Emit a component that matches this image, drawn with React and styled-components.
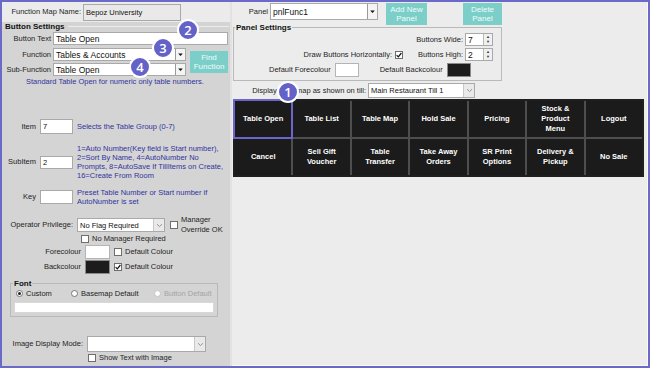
import React from 'react';
import styled, { createGlobalStyle } from 'styled-components';

const Global = createGlobalStyle`
  html, body { margin: 0; padding: 0; background: #ececec; }
  body {
    font-family: "Liberation Sans", Arial, sans-serif;
    font-size: 7.5px;
    color: #1e1e1e;
  }
  * { box-sizing: border-box; }
`;

const Frame = styled.div`
  position: relative;
  width: 650px;
  height: 368px;
  border: 2px solid #6c6ac8;
  display: flex;
  overflow: hidden;
`;

const LeftPane = styled.div`
  width: 228px;
  background: #d4d4d4;
  display: flex;
  flex-direction: column;
`;

const Divider = styled.div`
  width: 2px;
  background: #e2e2e2;
`;

const RightPane = styled.div`
  flex: 1;
  background: #ececec;
  display: flex;
  flex-direction: column;
  border-right: 1px solid #fafafa;
  border-bottom: 1px solid #fafafa;
`;

const TopBar = styled.div`
  height: 20px;
  background: #ebebeb;
  display: flex;
  align-items: center;
`;

const SectionTitle = styled.div`
  display: flex;
  align-items: center;
  height: 9px;
  line-height: 9px;
  padding-left: 3px;
  font-weight: bold;
  font-size: 8px;
  color: #111;
  &::after {
    content: "";
    flex: 1;
    height: 1px;
    margin: 0 1px 0 3px;
    background: #ededed;
  }
`;

const Row = styled.div`
  display: flex;
  align-items: ${p => p.$align || 'center'};
  justify-content: ${p => p.$justify || 'flex-start'};
  height: ${p => (p.$h ? `${p.$h}px` : 'auto')};
  margin-top: ${p => p.$mt || 0}px;
  margin-left: ${p => p.$ml || 0}px;
  flex-shrink: 0;
`;

const Col = styled.div`
  display: flex;
  flex-direction: column;
`;

const Label = styled.span`
  width: ${p => (p.$w ? `${p.$w}px` : 'auto')};
  flex-shrink: 0;
  text-align: ${p => (p.$w ? 'right' : 'left')};
  padding-right: ${p => (p.$w ? 2 : 0)}px;
  margin-left: ${p => p.$ml || 0}px;
  white-space: nowrap;
  color: ${p => (p.$muted ? '#a0a0a0' : '#1e1e1e')};
  line-height: 10px;
`;

const TextBox = styled.div`
  width: ${p => p.$w}px;
  height: ${p => p.$h}px;
  margin-left: ${p => p.$ml || 0}px;
  flex-shrink: 0;
  background: ${p => p.$bg || '#fff'};
  border: 1px solid #a9a9a9;
  padding: 0 2px;
  display: flex;
  align-items: center;
  white-space: nowrap;
  overflow: hidden;
  color: #111;
  font-size: ${p => (p.$big ? 8.5 : 7.5)}px;
`;

const SelectBox = styled(TextBox)`
  padding-right: 0;
  justify-content: space-between;
`;

const ArrowBox = styled.span`
  width: ${p => (p.$flat ? 11 : 10)}px;
  height: 100%;
  border-left: 1px solid ${p => (p.$flat ? '#c8c8c8' : '#9a9a9a')};
  background: ${p => (p.$flat ? '#e9e9e9' : '#f4f4f4')};
  display: flex;
  align-items: center;
  justify-content: center;
`;

const Spin = styled.span`
  width: 9px;
  height: 100%;
  border-left: 1px solid #b9b9b9;
  background: #f0f0f0;
  display: flex;
  flex-direction: column;
  align-items: center;
  justify-content: space-around;
  font-size: 4px;
  line-height: 4px;
  color: #333;
`;

const Help = styled.div`
  color: #33339e;
  line-height: ${p => p.$lh || 9}px;
  margin-left: ${p => p.$ml || 0}px;
  padding-left: ${p => p.$pl || 0}px;
  margin-top: ${p => p.$mt || 0}px;
  white-space: nowrap;
`;

const Check = styled.span`
  width: 8px;
  height: 8px;
  margin-left: ${p => p.$ml || 0}px;
  flex-shrink: 0;
  background: #fff;
  border: 1px solid #6e6e6e;
  display: flex;
  align-items: center;
  justify-content: center;
`;

const Radio = styled.span`
  width: 7px;
  height: 7px;
  border-radius: 50%;
  flex-shrink: 0;
  background: #fff;
  border: 1px solid ${p => (p.$disabled ? '#c4c4c4' : '#777')};
  display: flex;
  align-items: center;
  justify-content: center;
  &::after {
    content: "";
    width: 3px;
    height: 3px;
    border-radius: 50%;
    background: ${p => (p.$on ? '#222' : 'transparent')};
  }
`;

const Option = styled.span`
  width: ${p => (p.$w ? `${p.$w}px` : 'auto')};
  display: flex;
  align-items: center;
  gap: 3px;
  color: ${p => (p.$disabled ? '#a4a4a4' : '#1e1e1e')};
  white-space: nowrap;
`;

const Swatch = styled.span`
  width: ${p => p.$w}px;
  height: 14px;
  margin-left: ${p => p.$ml || 0}px;
  flex-shrink: 0;
  background: ${p => p.$c};
  border: 1px solid ${p => (p.$c === '#fff' ? '#b4b4b4' : '#8a8a8a')};
`;

const TealButton = styled.div`
  width: ${p => p.$w}px;
  height: 22px;
  margin-left: ${p => p.$ml || 0}px;
  margin-top: ${p => p.$mt || 0}px;
  flex-shrink: 0;
  background: #7ccfc9;
  color: #f1fbfa;
  display: flex;
  align-items: center;
  justify-content: center;
  text-align: center;
  line-height: 9px;
  font-size: 8px;
`;

const Group = styled.fieldset`
  margin: ${p => p.$mt || 0}px 0 0 ${p => p.$ml || 0}px;
  width: ${p => p.$w}px;
  padding: 0 ${p => p.$pr || 3}px 3px ${p => p.$pl || 3}px;
  border: 1px solid #b9b9b9;
  flex-shrink: 0;
  min-width: 0;
`;

const Legend = styled.legend`
  padding: 0 1px;
  margin-left: -1px;
  font-weight: bold;
  font-size: 8px;
  line-height: 9px;
  color: #111;
`;

const FontBox = styled.div`
  height: 11px;
  margin-top: 4px;
  background: #fff;
  border: 1px solid #d8d8d8;
`;

const ButtonGrid = styled.div`
  margin: 1px 0 0 1px;
  width: 411px;
  height: 78px;
  border: 2px solid #1f1f1f;
  background: #4e4e4e;
  display: grid;
  grid-template-columns: repeat(7, 1fr);
  grid-template-rows: repeat(2, 1fr);
  gap: 2px;
  flex-shrink: 0;
`;

const Cell = styled.div`
  background: #1b1b1b;
  color: #fff;
  font-weight: bold;
  font-size: 7.5px;
  line-height: 10px;
  display: flex;
  align-items: center;
  justify-content: center;
  text-align: center;
  padding: 0 4px;
  outline: ${p => (p.$selected ? '2px solid #6a67cc' : 'none')};
  position: relative;
  z-index: ${p => (p.$selected ? 1 : 0)};
`;

const Badge = styled.div`
  position: absolute;
  left: ${p => p.$x}px;
  top: ${p => p.$y}px;
  width: 22px;
  height: 22px;
  border-radius: 50%;
  background: #6462c8;
  border: 2px solid #fff;
  color: #fff;
  font-family: "Open Sans", "Liberation Sans", sans-serif;
  font-weight: 600;
  font-size: 13px;
  display: flex;
  align-items: center;
  justify-content: center;
  z-index: 5;
`;

const Tick = () => (
  <svg width="6" height="6" viewBox="0 0 6 6">
    <path d="M0.6 3.1 L2.3 4.8 L5.4 1" fill="none" stroke="#111" strokeWidth="1.2" />
  </svg>
);

const Arrow = ({ flat }) => (
  <svg width="7" height="5" viewBox="0 0 7 5">
    {flat
      ? <path d="M1 1.2 L3.5 3.6 L6 1.2" fill="none" stroke="#8a8a8a" strokeWidth="0.9" />
      : <path d="M1.2 1.5 L5.8 1.5 L3.5 4 Z" fill="#111" />}
  </svg>
);

const Select = ({ w, h, value, flat, big, ml }) => (
  <SelectBox $w={w} $h={h} $ml={ml} $big={big}>
    <span>{value}</span>
    <ArrowBox $flat={flat}><Arrow flat={flat} /></ArrowBox>
  </SelectBox>
);

const Spinner = ({ value, ml }) => (
  <SelectBox $w={28} $h={13} $ml={ml} $big>
    <span>{value}</span>
    <Spin><span>▲</span><span>▼</span></Spin>
  </SelectBox>
);

const buttons = [
  'Table Open', 'Table List', 'Table Map', 'Hold Sale', 'Pricing', 'Stock & Product Menu', 'Logout',
  'Cancel', 'Sell Gift Voucher', 'Table Transfer', 'Take Away Orders', 'SR Print Options', 'Delivery & Pickup', 'No Sale',
];

export default function App() {
  return (
    <>
      <Global />
      <Frame>
        <LeftPane>
          <TopBar>
            <Label $w={81}>Function Map Name:</Label>
            <TextBox $w={98} $h={17} $bg="#e9e9e9">Bepoz University</TextBox>
          </TopBar>
          <SectionTitle>Button Settings</SectionTitle>
          <Row $mt={1} $h={13}>
            <Label $w={51}>Button Text</Label>
            <TextBox $w={175} $h={13} $big>Table Open</TextBox>
          </Row>
          <Row $mt={3} $align="flex-start">
            <Col>
              <Row $h={13}>
                <Label $w={51}>Function</Label>
                <Select w={133} h={13} value="Tables & Accounts" big />
              </Row>
              <Row $mt={2} $h={13}>
                <Label $w={51}>Sub-Function</Label>
                <Select w={133} h={13} value="Table Open" big />
              </Row>
            </Col>
            <TealButton $w={38} $ml={4} $mt={3}>Find<br />Function</TealButton>
          </Row>
          <Help $mt={1} $pl={24}>Standard Table Open for numeric only table numbers.</Help>

          <Row $mt={33} $h={15}>
            <Label $w={36}>Item</Label>
            <TextBox $w={33} $h={15} $ml={2}>7</TextBox>
            <Help $ml={4}>Selects the Table Group (0-7)</Help>
          </Row>
          <Row $mt={10}>
            <Label $w={36}>SubItem</Label>
            <TextBox $w={33} $h={13} $ml={2}>2</TextBox>
            <Help $ml={4}>
              1=Auto Number(Key field is Start number),<br />
              2=Sort By Name, 4=AutoNumber No<br />
              Prompts, 8=AutoSave If TillItems on Create,<br />
              16=Create From Room
            </Help>
          </Row>
          <Row $mt={8}>
            <Label $w={36}>Key</Label>
            <TextBox $w={33} $h={14} $ml={2} />
            <Help $ml={4}>
              Preset Table Number or Start number if<br />
              AutoNumber is set
            </Help>
          </Row>

          <Row $mt={9} $h={20}>
            <Label $w={73}>Operator Privilege:</Label>
            <Select w={88} h={14} ml={2} value="No Flag Required" flat />
            <Check $ml={5} />
            <Label $ml={3}>Manager<br />Override OK</Label>
          </Row>
          <Row $mt={-1} $h={9} $ml={79}>
            <Check />
            <Label $ml={3}>No Manager Required</Label>
          </Row>
          <Row $mt={2} $h={14}>
            <Label $w={81}>Forecolour</Label>
            <Swatch $w={25} $ml={2} $c="#fff" />
            <Check $ml={4} />
            <Label $ml={3}>Default Colour</Label>
          </Row>
          <Row $mt={1} $h={14}>
            <Label $w={81}>Backcolour</Label>
            <Swatch $w={25} $ml={2} $c="#1c1c1c" />
            <Check $ml={4}><Tick /></Check>
            <Label $ml={3}>Default Colour</Label>
          </Row>

          <Group $mt={5} $ml={8} $w={208}>
            <Legend>Font</Legend>
            <Row $h={10} $ml={2}>
              <Option $w={55}><Radio $on />Custom</Option>
              <Option $w={83}><Radio />Basemap Default</Option>
              <Option $disabled><Radio $disabled />Button Default</Option>
            </Row>
            <FontBox />
          </Group>

          <Row $mt={19} $h={16}>
            <Label $w={83}>Image Display Mode:</Label>
            <Select w={119} h={16} ml={2} value="" flat />
          </Row>
          <Row $mt={1} $h={9} $ml={86}>
            <Check />
            <Label $ml={3}>Show Text with Image</Label>
          </Row>
        </LeftPane>

        <Divider />

        <RightPane>
          <Row $align="flex-start" $h={23} style={{ paddingTop: 1 }}>
            <Label $w={38} style={{ lineHeight: '17px' }}>Panel</Label>
            <Select w={108} h={17} value="pnlFunc1" big />
            <TealButton $w={41} $ml={8}>Add New<br />Panel</TealButton>
            <TealButton $w={39} $ml={36}>Delete<br />Panel</TealButton>
          </Row>

          <Group $mt={-2} $ml={1} $w={269} $pl={2} $pr={8}>
            <Legend>Panel Settings</Legend>
            <Row $mt={1} $h={13} $justify="flex-end">
              <Label>Buttons Wide:</Label>
              <Spinner value="7" ml={2} />
            </Row>
            <Row $mt={2} $h={13} $justify="flex-end">
              <Label>Draw Buttons Horizontally:</Label>
              <Check $ml={3}><Tick /></Check>
              <Label $ml={15}>Buttons High:</Label>
              <Spinner value="2" ml={2} />
            </Row>
            <Row $mt={2} $h={14}>
              <Label $ml={33}>Default Forecolour</Label>
              <Swatch $w={24} $ml={4} $c="#fff" />
              <Label $ml={21}>Default Backcolour</Label>
              <Swatch $w={24} $ml={4} $c="#1c1c1c" />
            </Row>
          </Group>

          <Row $mt={2} $h={15}>
            <Label $w={136}>Display Basemap as shown on till:</Label>
            <Select w={107} h={15} value="Main Restaurant Till 1" flat />
          </Row>

          <ButtonGrid>
            {buttons.map((b, i) => (
              <Cell key={b} $selected={i === 0}>{b}</Cell>
            ))}
          </ButtonGrid>
        </RightPane>

        <Badge $x={275} $y={79}>1</Badge>
        <Badge $x={175} $y={17}>2</Badge>
        <Badge $x={150} $y={35}>3</Badge>
        <Badge $x={127} $y={54}>4</Badge>
      </Frame>
    </>
  );
}
